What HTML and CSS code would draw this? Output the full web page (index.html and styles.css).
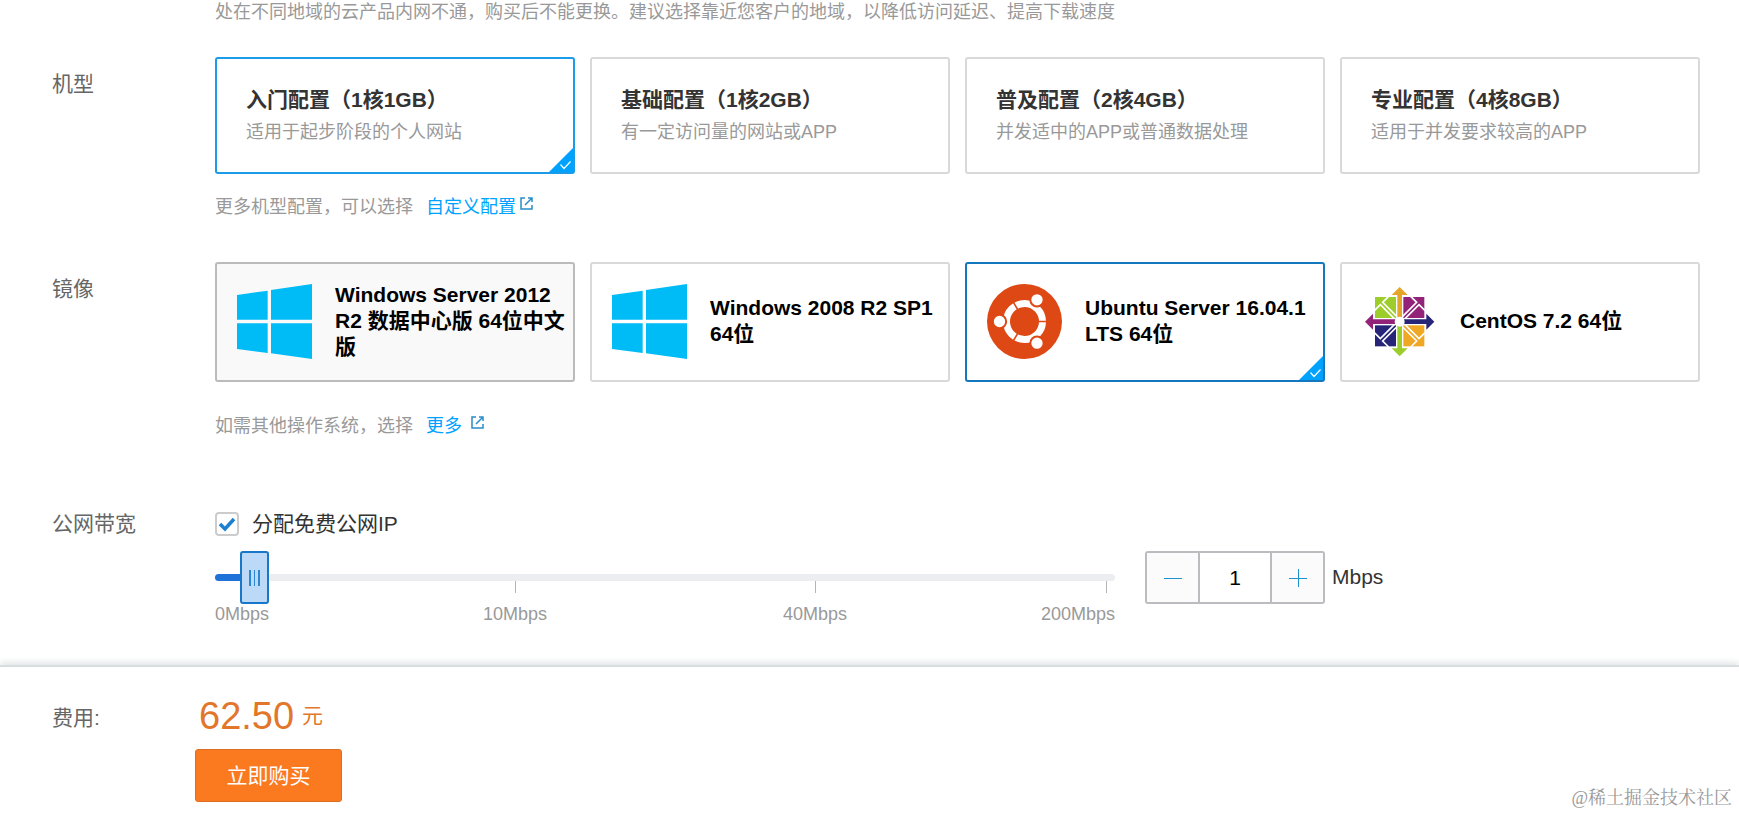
FILE: index.html
```html
<!DOCTYPE html>
<html lang="zh-CN">
<head>
<meta charset="utf-8">
<meta name="viewport" content="width=device-width, initial-scale=1">
<title>云服务器购买</title>
<link rel="stylesheet" href="styles.css">
</head>
<body>
<svg class="defs" aria-hidden="true">
  <symbol id="windows" viewBox="0 0 225 225">
    <path fill="#00bcf6" d="M0 33 92 20V107H0ZM102 18 225 0V107H102ZM0 118H92V207L0 195ZM102 118H225V225L102 208Z"/>
  </symbol>
  <symbol id="external" viewBox="0 0 13 13">
    <path fill="none" stroke="#2a8cc8" stroke-width="1.500" d="M5 1H1V12H12V8M5 8 11 2M8 1H12V5"/>
  </symbol>
  <symbol id="corner" viewBox="0 0 24 24">
    <path fill="#00a2ff" d="M24 0V24H0Z"/>
    <path fill="none" stroke="#fff" stroke-width="1.2" d="M11.500 16.500 15 20.500 21.500 13.500"/>
  </symbol>
</svg>
<form class="page">
  <main class="config">
    <p class="hint intro">处在不同地域的云产品内网不通，购买后不能更换。建议选择靠近您客户的地域，以降低访问延迟、提高下载速度</p>

    <section class="row model-row">
      <h2 class="row-label" id="model-label">机型</h2>
      <div class="row-body">
        <div class="cards" role="radiogroup" aria-labelledby="model-label">
          <label class="card model"><input class="card-input" type="radio" name="model" checked><span class="card-title">入门配置（1核1GB）</span><span class="hint">适用于起步阶段的个人网站</span><svg class="corner" aria-hidden="true"><use href="#corner"/></svg></label>
          <label class="card model"><input class="card-input" type="radio" name="model"><span class="card-title">基础配置（1核2GB）</span><span class="hint">有一定访问量的网站或APP</span><svg class="corner" aria-hidden="true"><use href="#corner"/></svg></label>
          <label class="card model"><input class="card-input" type="radio" name="model"><span class="card-title">普及配置（2核4GB）</span><span class="hint">并发适中的APP或普通数据处理</span><svg class="corner" aria-hidden="true"><use href="#corner"/></svg></label>
          <label class="card model"><input class="card-input" type="radio" name="model"><span class="card-title">专业配置（4核8GB）</span><span class="hint">适用于并发要求较高的APP</span><svg class="corner" aria-hidden="true"><use href="#corner"/></svg></label>
        </div>
        <p class="hint more">更多机型配置，可以选择<a class="link" href="#custom">自定义配置<svg class="external" aria-hidden="true"><use href="#external"/></svg></a></p>
      </div>
    </section>

    <section class="row image-row">
      <h2 class="row-label" id="image-label">镜像</h2>
      <div class="row-body">
        <div class="cards" role="radiogroup" aria-labelledby="image-label">
          <label class="card image hovered"><input class="card-input" type="radio" name="image"><svg class="logo" aria-hidden="true"><use href="#windows"/></svg><span class="image-name">Windows Server 2012 R2 数据中心版 64位中文版</span><svg class="corner" aria-hidden="true"><use href="#corner"/></svg></label>
          <label class="card image"><input class="card-input" type="radio" name="image"><svg class="logo" aria-hidden="true"><use href="#windows"/></svg><span class="image-name">Windows 2008 R2 SP1 64位</span><svg class="corner" aria-hidden="true"><use href="#corner"/></svg></label>
          <label class="card image"><input class="card-input" type="radio" name="image" checked>
            <svg class="logo" viewBox="0 0 225 225" aria-hidden="true">
              <circle cx="112.500" cy="112.500" r="112.500" fill="#dd4814"/>
              <circle cx="112.500" cy="112.500" r="54" fill="none" stroke="#fff" stroke-width="21"/>
              <path stroke="#dd4814" stroke-width="5" d="M150 112.500H182M94 80 77.500 52M94 145 77.500 173"/>
              <g fill="#fff" stroke="#dd4814" stroke-width="6"><circle cx="37.500" cy="112.500" r="20"/><circle cx="150" cy="47.500" r="20"/><circle cx="150" cy="177.500" r="20"/></g>
            </svg><span class="image-name">Ubuntu Server 16.04.1 LTS 64位</span><svg class="corner" aria-hidden="true"><use href="#corner"/></svg></label>
          <label class="card image"><input class="card-input" type="radio" name="image">
            <svg class="logo" viewBox="0 0 225 225" aria-hidden="true">
              <path fill="#9ccd2a" d="M39 39H102V102H39Z"/><path fill="#932279" d="M124 39H187V102H124Z"/>
              <path fill="#262577" d="M39 124H102V187H39Z"/><path fill="#efa724" d="M124 124H187V187H124Z"/>
              <g fill="none" stroke="#fff" stroke-width="5">
                <path d="M37 80 55 62 103 110M80 37 62 55 110 103"/>
                <path d="M146 37 164 55 116 103M189 80 171 62 123 110"/>
                <path d="M189 146 171 164 123 116M146 189 164 171 116 123"/>
                <path d="M80 189 62 171 110 123M37 146 55 164 103 116"/>
              </g>
              <path fill="#e5a52a" d="M113 9 137 33H120V108H106V33H89Z"/>
              <path fill="#262577" d="M217 113 193 137V120H118V106H193V89Z"/>
              <path fill="#9ccd2a" d="M113 217 89 193H106V118H120V193H137Z"/>
              <path fill="#932279" d="M9 113 33 89V106H108V120H33V137Z"/>
              <circle cx="113" cy="113" r="15" fill="#fff"/>
            </svg><span class="image-name">CentOS 7.2 64位</span><svg class="corner" aria-hidden="true"><use href="#corner"/></svg></label>
        </div>
        <p class="hint more image-more">如需其他操作系统，选择<a class="link spaced" href="#images">更多<svg class="external" aria-hidden="true"><use href="#external"/></svg></a></p>
      </div>
    </section>

    <section class="row bandwidth-row">
      <h2 class="row-label" id="bandwidth-label">公网带宽</h2>
      <div class="row-body">
        <label class="check"><input class="check-box" type="checkbox" checked>分配免费公网IP</label>
        <div class="bandwidth">
          <div class="slider">
            <input class="range" type="range" min="0" max="1000" value="29" aria-labelledby="bandwidth-label" aria-valuetext="1Mbps">
            <div class="scale"><span class="mark first">0Mbps</span><span class="mark">10Mbps</span><span class="mark">40Mbps</span><span class="mark last">200Mbps</span></div>
          </div>
          <div class="stepper">
            <button class="step" type="button" aria-label="减少"><svg class="sign" viewBox="0 0 18 18" aria-hidden="true"><path d="M0 9H18"/></svg></button>
            <input class="amount" id="amount" type="text" inputmode="numeric" value="1">
            <button class="step" type="button" aria-label="增加"><svg class="sign" viewBox="0 0 18 18" aria-hidden="true"><path d="M0 9H18M9 0V18"/></svg></button>
          </div>
          <label class="unit" for="amount">Mbps</label>
        </div>
      </div>
    </section>
  </main>

  <footer class="checkout">
    <span class="fee-label">费用:</span>
    <div class="fee">
      <p class="price"><strong class="price-value">62.50</strong>元</p>
      <button class="buy" type="submit">立即购买</button>
    </div>
    <span class="watermark">@稀土掘金技术社区</span>
  </footer>
</form>
</body>
</html>
```
FILE: styles.css
```css
* { box-sizing: border-box; }

body {
  margin: 0;
  background: #fff;
  color: #333;
  font: 400 21px/24px "Liberation Sans", "Noto Sans CJK SC", sans-serif;
}

p, h2 { margin: 0; }

.defs { position: absolute; width: 0; height: 0; }

.config { padding: 0 39px 43px 52px; }

.hint { color: #999; font-size: 18px; }

.intro { padding-left: 163px; }

.row { display: flex; }
.row-label { flex: 0 0 163px; color: #666; font-size: 21px; font-weight: 400; }
.row-body { flex: 1; min-width: 0; }

.model-row { margin-top: 33px; }
.image-row { margin-top: 44px; }
.bandwidth-row { margin-top: 74px; }
.model-row .row-label, .image-row .row-label { padding-top: 15px; }

.cards { display: grid; grid-template-columns: repeat(4, 1fr); gap: 15px; }

.card {
  position: relative;
  display: flex;
  border: 2px solid #d9d9d9;
  border-radius: 3px;
  cursor: pointer;
}
.card-input { position: absolute; inset: 0; margin: 0; opacity: 0; }
.corner { position: absolute; right: 0; bottom: 0; display: none; width: 24px; height: 24px; }
.card:has(:checked) .corner { display: block; }

.model { flex-direction: column; gap: 8px; height: 117px; padding: 29px 29px; }
.model:has(:checked) { border-color: #1a9ce8; }
.card-title { font-weight: 700; }

.image { align-items: center; gap: 23px; height: 120px; padding: 0 6px 2px 20px; }
.image:has(:checked) { border-color: #1478bf; }
.hovered { border-color: #bbb; background: #f9f9f9; }
.logo { flex: none; width: 75px; height: 75px; }
.image-name { color: #000; font-weight: 700; line-height: 26px; }

.more { display: flex; gap: 13px; margin-top: 21px; }
.image-more { margin-top: 32px; }
.image-row { margin-top: 43px; }
.link { display: flex; gap: 4px; color: #00a2ff; text-decoration: none; }
.spaced { gap: 9px; }
.external { width: 13px; height: 13px; margin-top: 2px; }

.check { display: flex; gap: 13px; width: max-content; }
.check-box {
  appearance: none;
  width: 24px;
  height: 24px;
  margin: 0;
  border: 2px solid #ccc;
  border-radius: 4px;
  background: #fff;
}
.check-box:checked {
  background: #fff url('data:image/svg+xml,<svg xmlns="http://www.w3.org/2000/svg" viewBox="0 0 20 20"><path d="M3 10 8 15 17 5" fill="none" stroke="%231c80d0" stroke-width="3.5"/></svg>');
}

.bandwidth { display: flex; margin-top: 15px; }
.slider { flex: 1; max-width: 900px; margin-right: 30px; }

.range { appearance: none; display: block; width: 100%; height: 53px; margin: 0; background: none; }
.range::-webkit-slider-runnable-track {
  height: 7px;
  border-radius: 4px;
  background: linear-gradient(90deg, #1f72d8 4%, #ebedf0 4%);
}
.range::-webkit-slider-thumb {
  appearance: none;
  width: 29px;
  height: 53px;
  margin-top: -23px;
  border: 2px solid #1877c8;
  border-radius: 3px;
  background:
    linear-gradient(#2b87d1, #2b87d1) 7px 50% / 2px 16px no-repeat,
    linear-gradient(#2b87d1, #2b87d1) 12px 50% / 1px 16px no-repeat,
    linear-gradient(#2b87d1, #2b87d1) 16px 50% / 2px 16px no-repeat,
    #bcdaf7;
}

.scale { display: grid; grid-template-columns: 1fr 2fr 2fr 1fr; color: #999; font-size: 18px; line-height: 20px; }
.mark { position: relative; text-align: center; }
.mark::before {
  content: "";
  position: absolute;
  left: 50%;
  top: -23px;
  width: 1px;
  height: 12px;
  background: #b5b5b5;
}
.first { text-align: left; }
.first::before { display: none; }
.last { text-align: right; }
.last::before { left: auto; right: 8px; }

.stepper {
  display: flex;
  width: 180px;
  height: 53px;
  margin-right: 7px;
  border: 2px solid #bbbcc0;
  border-radius: 3px;
}
.step {
  display: grid;
  place-items: center;
  flex: 0 0 51px;
  padding: 0;
  border: 0;
  background: #fbfbfc;
}
.sign { width: 18px; height: 18px; stroke: #1c94d2; stroke-width: 1; shape-rendering: crispEdges; }
.amount {
  flex: 1;
  min-width: 0;
  padding: 0;
  border: solid #bbbcc0;
  border-width: 0 2px;
  background: #fff;
  color: #000;
  font: inherit;
  text-align: center;
}
.unit { line-height: 52px; }

.checkout {
  position: relative;
  display: flex;
  padding: 29px 39px 13px 52px;
  border-top: 2px solid #d8dddf;
  box-shadow: 0 -3px 6px #e4e7e8;
  margin-top: -2px;
}
.fee-label { flex: 0 0 143px; padding-top: 10px; color: #666; }
.price { display: flex; align-items: center; gap: 8px; padding-left: 4px; color: #e2762b; line-height: 40px; }
.price-value { font-size: 38px; font-weight: 400; }
.buy {
  display: block;
  width: 147px;
  height: 53px;
  margin-top: 13px;
  border: 1px solid #dc6e23;
  border-radius: 3px;
  background: #fb7a20;
  color: #fff;
  font: inherit;
}
.watermark {
  position: absolute;
  right: 7px;
  bottom: 5px;
  color: #999;
  font: 400 18px/24px "Liberation Serif", "Noto Serif CJK SC", "Noto Sans CJK SC", serif;
}
```
